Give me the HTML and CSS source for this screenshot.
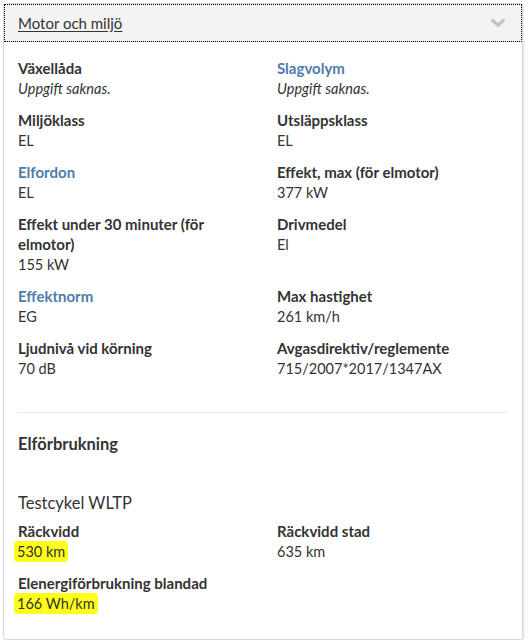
FILE: index.html
```html
<!DOCTYPE html>
<html lang="sv">
<head>
  <meta charset="UTF-8" />
  <title>Motor och miljö</title>
  <link rel="stylesheet" href="styles.css">
</head>
<body>
  <div class="panel">
    <div class="panel-head">
      <a class="panel-title" href="#">Motor och miljö</a>
      <svg class="chevron" viewBox="0 0 16 10">
        <path d="M0.5 2.8 2.8 0.5 8 5 13.2 0.5 15.5 2.8 8 9.6z"/>
      </svg>
    </div>

    <div class="panel-body">
      <dl class="facts">
        <div class="fact">
          <dt>Växellåda</dt>
          <dd class="missing">Uppgift saknas.</dd>
        </div>
        <div class="fact">
          <dt class="link">Slagvolym</dt>
          <dd class="missing">Uppgift saknas.</dd>
        </div>
        <div class="fact">
          <dt>Miljöklass</dt>
          <dd>EL</dd>
        </div>
        <div class="fact">
          <dt>Utsläppsklass</dt>
          <dd>EL</dd>
        </div>
        <div class="fact">
          <dt class="link">Elfordon</dt>
          <dd>EL</dd>
        </div>
        <div class="fact">
          <dt>Effekt, max (för elmotor)</dt>
          <dd>377 kW</dd>
        </div>
        <div class="fact">
          <dt>Effekt under 30 minuter (för elmotor)</dt>
          <dd>155 kW</dd>
        </div>
        <div class="fact">
          <dt>Drivmedel</dt>
          <dd>El</dd>
        </div>
        <div class="fact">
          <dt class="link">Effektnorm</dt>
          <dd>EG</dd>
        </div>
        <div class="fact">
          <dt>Max hastighet</dt>
          <dd>261 km/h</dd>
        </div>
        <div class="fact">
          <dt>Ljudnivå vid körning</dt>
          <dd>70 dB</dd>
        </div>
        <div class="fact">
          <dt>Avgasdirektiv/reglemente</dt>
          <dd>715/2007*2017/1347AX</dd>
        </div>
      </dl>

      <hr class="divider">

      <h3 class="section-title">Elförbrukning</h3>
      <h4 class="sub-title">Testcykel WLTP</h4>

      <dl class="facts">
        <div class="fact">
          <dt>Räckvidd</dt>
          <dd><mark class="hl">530 km</mark></dd>
        </div>
        <div class="fact">
          <dt>Räckvidd stad</dt>
          <dd>635 km</dd>
        </div>
        <div class="fact">
          <dt>Elenergiförbrukning blandad</dt>
          <dd><mark class="hl">166 Wh/km</mark></dd>
        </div>
      </dl>
    </div>
  </div>
</body>
</html>
```

FILE: styles.css
```css
:root {
  --text:   #333;
  --link:   #4f7bab;
  --border: #d9d9d9;
  --head:   #f3f3f3;
}
* { box-sizing: border-box; margin: 0; padding: 0; }
body {
  background: #fff;
  font-family: Lato, sans-serif;
  color: var(--text);
}
.panel {
  width: 520px;
  margin: 3px 0 0 3px;
  height: 637px;
  border: 1px solid var(--border);
  border-radius: 3px;
  box-shadow: 1px 1px 2px rgba(0,0,0,0.12);
}
.panel-head {
  display: flex;
  align-items: center;
  justify-content: space-between;
  height: 38px;
  padding: 0 14px;
  background: var(--head);
  outline: 1px dotted #000;
  outline-offset: -1px;
  border-bottom: 1px solid #e2e2e2;
}
.panel-title {
  font-size: 15px;
  color: var(--text);
  text-decoration: underline;
  text-underline-offset: 2px;
}
.chevron {
  width: 16px;
  height: 10px;
  fill: #c4c4c4;
  margin-right: 2px;
}
.panel-body {
  padding: 16px 14px 0;
}
.facts {
  display: grid;
  grid-template-columns: 240px 1fr;
  column-gap: 19px;
  row-gap: 11px;
}
.fact dt {
  font-weight: bold;
  font-size: 15px;
  line-height: 20px;
}
.fact dt.link { color: var(--link); }
.fact dd {
  font-size: 14.5px;
  line-height: 20px;
  padding-top: 1px;
}
.fact dd.missing { font-style: italic; }

.divider {
  border: none;
  border-top: 1px solid #eaeaea;
  margin: 33px 0 19px;
}
.section-title {
  font-size: 16.5px;
  font-weight: bold;
  line-height: 24px;
  margin-bottom: 35px;
}
.sub-title {
  font-size: 16.5px;
  font-weight: normal;
  line-height: 24px;
  margin-bottom: 6px;
}
.hl {
  background: #ffff1a;
  color: var(--text);
  padding: 2px 3px;
  margin-left: -4px;
  border-radius: 4px;
}
```
